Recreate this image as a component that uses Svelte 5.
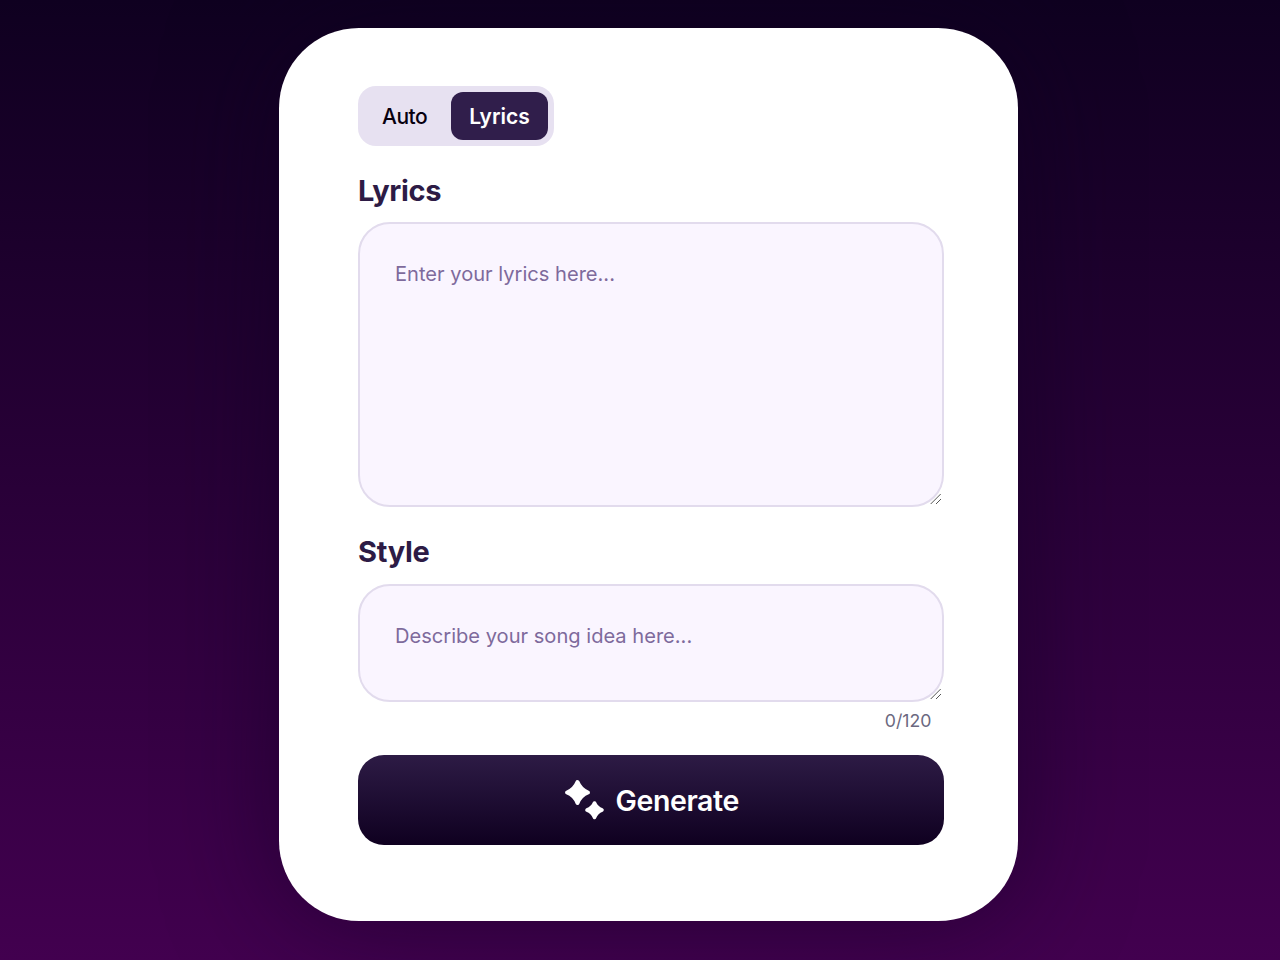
<script>
  let mode = $state('Lyrics');
  let lyrics = $state('');
  let style = $state('');
</script>

<main class="page">
  <section class="card">
    <div class="toggle">
      <button class="tab" class:active={mode === 'Auto'} onclick={() => (mode = 'Auto')}>Auto</button>
      <button class="tab" class:active={mode === 'Lyrics'} onclick={() => (mode = 'Lyrics')}>Lyrics</button>
    </div>
    <h2 class="first">Lyrics</h2>
    <textarea class="lyrics" placeholder="Enter your lyrics here..." bind:value={lyrics}></textarea>
    <h2 class="second">Style</h2>
    <textarea class="style" placeholder="Describe your song idea here..." bind:value={style}></textarea>
    <div class="count">{style.length}/120</div>
    <button class="generate">
      <svg width="42" height="42" viewBox="0 0 42 42" aria-hidden="true">
        <path fill="#fff" stroke="#fff" stroke-width="4" stroke-linejoin="round" d="M14.500 3Q17.500 10.500 25 13.500Q17.500 16.500 14.500 24Q11.500 16.500 4 13.500Q11.500 10.500 14.500 3Z"/>
        <path fill="#fff" stroke="#fff" stroke-width="3.600" stroke-linejoin="round" d="M31.500 24Q33.500 29 39 31Q33.500 33 31.500 38.500Q29.500 33 24 31Q29.500 29 31.500 24Z"/>
      </svg>
      <span>Generate</span>
    </button>
  </section>
</main>

<style>
  :global(body) {
    margin: 0;
  }
  .page {
    box-sizing: border-box;
    height: 960px;
    padding: 28px 0 0 279px;
    overflow: hidden;
    background: linear-gradient(180deg, #0f0020 0%, #42004f 100%);
    font-family: Inter, "Liberation Sans", sans-serif;
  }
  .card {
    box-sizing: border-box;
    width: 739px;
    height: 893px;
    padding: 58px 74.500px 0 79px;
    display: flex;
    flex-direction: column;
    align-items: stretch;
    background: #fff;
    border-radius: 80px;
    box-shadow: 0 0 110px rgba(15, 0, 32, 0.55);
  }
  .toggle {
    box-sizing: border-box;
    align-self: flex-start;
    display: flex;
    height: 60px;
    padding: 6px;
    gap: 6px;
    background: #e7e1f1;
    border-radius: 18px;
  }
  .tab {
    border: 0;
    background: transparent;
    color: #0f0020;
    font: 500 21px Inter, "Liberation Sans", sans-serif;
    height: 48px;
    padding: 0 18px;
    border-radius: 12px;
  }
  .tab:first-child {
    letter-spacing: -0.5px;
    color: #08000f;
  }
  .tab.active {
    background: #301e4b;
    color: #fff;
    font-weight: 600;
  }
  h2 {
    margin: 0;
    color: #2d1b45;
    font-size: 29px;
    font-weight: 700;
    line-height: 36px;
    letter-spacing: -0.3px;
  }
  h2.first {
    margin-top: 27px;
    margin-bottom: 13px;
  }
  h2.second {
    margin-top: 27px;
    margin-bottom: 14px;
  }
  textarea {
    display: block;
    box-sizing: border-box;
    width: 100%;
    padding: 38px 35px 34px;
    border: 2px solid #e2dbed;
    border-radius: 32px;
    background: #faf5ff;
    color: #2d1b45;
    font: 400 20.100px/24px Inter, "Liberation Sans", sans-serif;
    outline: none;
  }
  textarea::placeholder {
    color: #7e6a9c;
    opacity: 1;
  }
  textarea::-webkit-resizer {
    background: url("data:image/svg+xml,%3Csvg xmlns='http://www.w3.org/2000/svg' width='15' height='15'%3E%3Cpath d='M3.700 14L13.700 4M9 14L14 9' stroke='%23555' fill='none'/%3E%3C/svg%3E") no-repeat;
  }
  .lyrics {
    height: 285px;
  }
  .style {
    height: 118px;
  }
  .count {
    margin-top: 8px;
    padding-right: 12px;
    text-align: right;
    font-size: 17.700px;
    line-height: 22px;
    color: #6b6880;
  }
  .generate {
    margin-top: 23px;
    height: 90px;
    display: flex;
    align-items: center;
    justify-content: center;
    gap: 11px;
    border: 0;
    border-radius: 26px;
    background: linear-gradient(180deg, #2d1b45 0%, #0f0020 100%);
    color: #fff;
    font: 600 28.500px Inter, "Liberation Sans", sans-serif;
    letter-spacing: -0.4px;
  }
</style>
